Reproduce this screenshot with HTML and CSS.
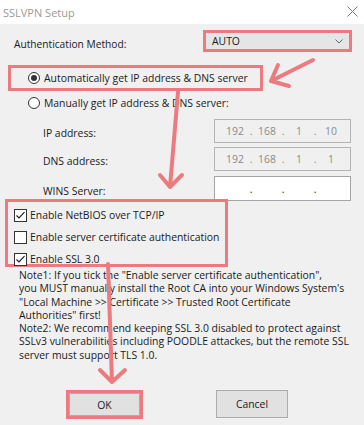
FILE: index.html
```html
<!doctype html>
<html lang="en">
<head>
  <meta charset="utf-8">
  <title>SSLVPN Setup</title>
  <link rel="stylesheet" href="styles.css">
</head>
<body>
  <div class="titlebar">
    <span class="title">SSLVPN Setup</span>
    <svg class="close" width="11" height="11" viewBox="0 0 11 11"><path d="M0.5,0.5 L10.5,10.5 M10.5,0.5 L0.5,10.5" stroke="#7a7a7a" stroke-width="1" fill="none"/></svg>
  </div>

  <div class="dialog">
    <div class="auth-row">
      <span class="auth-label">Authentication Method:</span>
      <div class="hl select-hl">
        <div class="select">
          <span>AUTO</span>
          <svg class="chev" width="8" height="5" viewBox="0 0 8 5"><polyline points="0.5,0.5 4,4 7.5,0.5" stroke="#666" stroke-width="1" fill="none"/></svg>
        </div>
      </div>
    </div>

    <div class="hl auto-box">
      <span class="radio checked"></span>
      <span>Automatically get IP address &amp; DNS server</span>
    </div>

    <div class="radio-row">
      <span class="radio"></span>
      <span>Manually get IP address &amp; DNS server:</span>
    </div>

    <div class="field">
      <span class="field-label">IP address:</span>
      <div class="ip disabled">
        <span class="seg">192</span><span class="dot">.</span><span class="seg">168</span><span class="dot">.</span><span class="seg">1</span><span class="dot">.</span><span class="seg">10</span>
      </div>
    </div>
    <div class="field">
      <span class="field-label">DNS address:</span>
      <div class="ip disabled">
        <span class="seg">192</span><span class="dot">.</span><span class="seg">168</span><span class="dot">.</span><span class="seg">1</span><span class="dot">.</span><span class="seg">1</span>
      </div>
    </div>
    <div class="field wins">
      <span class="field-label">WINS Server:</span>
      <div class="ip">
        <span class="seg"></span><span class="dot">.</span><span class="seg"></span><span class="dot">.</span><span class="seg"></span><span class="dot">.</span><span class="seg"></span>
      </div>
    </div>

    <div class="hl checks">
      <div class="check-row">
        <span class="checkbox"><svg width="13" height="13" viewBox="0 0 13 13"><polyline points="2.5,6.5 5,9 10.5,3.2" stroke="#222" stroke-width="1.2" fill="none"/></svg></span>
        <span>Enable NetBIOS over TCP/IP</span>
      </div>
      <div class="check-row">
        <span class="checkbox"></span>
        <span>Enable server certificate authentication</span>
      </div>
      <div class="check-row">
        <span class="checkbox"><svg width="13" height="13" viewBox="0 0 13 13"><polyline points="2.5,6.5 5,9 10.5,3.2" stroke="#222" stroke-width="1.2" fill="none"/></svg></span>
        <span>Enable SSL 3.0</span>
      </div>
    </div>

    <p class="notes">Note1: If you tick the "Enable server certificate authentication",<br>you MUST manually install the Root CA into your Windows System's<br>"Local Machine &gt;&gt; Certificate &gt;&gt; Trusted Root Certificate<br>Authorities" first!<br>Note2: We recommend keeping SSL 3.0 disabled to protect against<br>SSLv3 vulnerabilities including POODLE attackes, but the remote SSL<br>server must support TLS 1.0.</p>

    <div class="buttons">
      <div class="hl ok-hl"><button class="btn">OK</button></div>
      <button class="btn cancel">Cancel</button>
    </div>
  </div>

  <!-- annotation arrows drawn over the dialog -->
  <svg class="arrows" width="364" height="425" viewBox="0 0 364 425">
    <g stroke="#ec7b7f" stroke-width="4" fill="none" stroke-linecap="round" stroke-linejoin="round">
      <path d="M313,60 L271,81 M278,65 L271,81 L289,86"/>
      <path d="M178,92 L170,187 M160,175 L170,187 L182,175"/>
      <path d="M108,264 L112,382 M100,370 L112,382 L125,370"/>
    </g>
  </svg>
</body>
</html>
```

FILE: styles.css
```css
:root{
  --bg:#f0f0f0;
  --red:#ec7b7f;
  --text:#1a1a1a;
  --border:#a5a5a5;
}
*{box-sizing:border-box}
html,body{margin:0;height:100%}
body{position:relative;width:364px;height:425px;overflow:hidden;background:var(--bg);color:var(--text);font-family:"Open Sans","Noto Sans",sans-serif;font-size:10.4px;white-space:nowrap}

.titlebar{height:24px;background:#fff;display:flex;align-items:center;padding:0 6px 0 3px}
.title{color:#9a9a9a;font-size:11px}
.close{margin-left:auto;margin-top:-1px}

.hl{border:3px solid var(--red)}

.auth-row{display:flex;align-items:center;margin-top:6px;height:22px}
.auth-label{padding-left:14px;padding-top:5px;font-size:10.2px}
.select-hl{margin-left:auto;margin-right:12px;width:149px;height:22px}
.select{height:100%;background:#e5e5e5;display:flex;align-items:center;padding:0 6px}
.chev{margin-left:auto}

.auto-box{margin:13px 0 0 8px;width:255px;height:26px;display:flex;align-items:center;gap:4px;padding-left:17px}
.radio-row{height:24px;display:flex;align-items:center;gap:4px;padding-left:28px}

.radio{width:12px;height:12px;border:1px solid #333;border-radius:50%;background:#fff;display:flex;align-items:center;justify-content:center;flex:none}
.radio.checked:after{content:"";width:6px;height:6px;border-radius:50%;background:#333}

.field{display:flex;align-items:center;height:24px;margin-top:4px}
.field:first-of-type{margin-top:0}
.field.wins{margin-top:5px;height:25px}
.field-label{padding-left:43px;padding-top:4px}
.ip{margin-left:auto;margin-right:13px;width:137px;height:100%;border:1px solid var(--border);background:#fff;display:flex;align-items:center;padding-left:7px}
.ip.disabled{background:var(--bg);color:#8a8a8a;border-color:#b4b4b4}
.seg{width:26px;text-align:center}
.dot{width:6px;text-align:center}

.checks{margin:-2px 0 0 5px;width:223px;height:68px;padding-top:2px;position:relative}
.check-row{height:22px;display:flex;align-items:center;gap:3px;padding-left:6px}
.checkbox{width:13px;height:13px;border:1px solid #333;background:#fff;flex:none;display:flex}
.checkbox svg{margin:-1px}

.notes{margin:2px 0 0;padding-left:19px;line-height:13.3px}

.buttons{display:flex;align-items:flex-start;margin-top:28px;padding-left:66px}
.btn{font:inherit;color:var(--text);background:#e1e1e1;border:1px solid #adadad;padding:0;cursor:pointer}
.ok-hl{width:77px;height:29px;display:flex}
.ok-hl .btn{flex:1}
.cancel{margin-left:73px;width:72px;height:28px}

.arrows{position:absolute;left:0;top:0;pointer-events:none}
```
